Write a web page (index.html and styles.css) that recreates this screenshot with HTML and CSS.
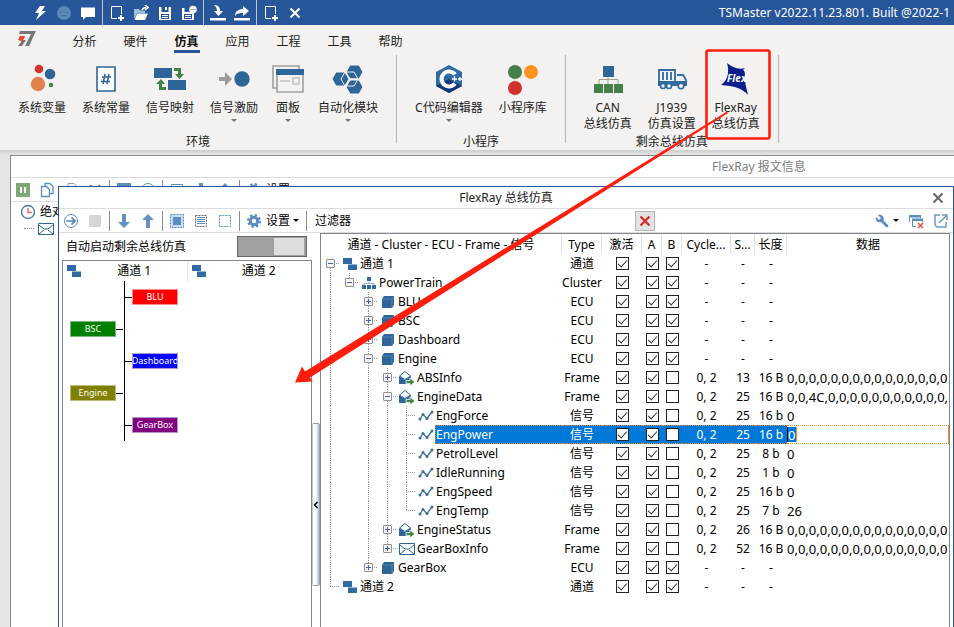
FILE: index.html
```html
<!DOCTYPE html>
<html lang="zh-CN">
<head>
<meta charset="utf-8">
<title>TSMaster</title>
<link rel="stylesheet" href="styles.css">
</head>
<body>
<svg class="defs" aria-hidden="true">
  <symbol id="i-channel" viewBox="0 0 16 16"><path fill="#2f6aa3" d="M1 2h9v6H1zM6 8.500h9v5.500H6z"/></symbol>
  <symbol id="i-cluster" viewBox="0 0 16 16"><path fill="none" stroke="#8fb2d4" d="M8 5v4M3 11V8.500h10V11"/><path fill="#2f6aa3" d="M6 2h4v4H6zM1 10h4v4H1zM6 10h4v4H6zM11 10h4v4h-4z"/></symbol>
  <symbol id="i-ecu" viewBox="0 0 16 16"><path fill="#2f6699" d="M2 5l2-3h10v9l-2 3H2z"/><path fill="none" stroke="#5d8cb8" stroke-width=".7" d="M2 5h10v9M12 5l2-3"/></symbol>
  <symbol id="i-frame" viewBox="0 0 16 16"><path fill="#2f6699" d="M0 6l6 4 6-4v8H0z"/><path fill="#fff" stroke="#2f6699" d="M.5 6L6 1.500 11.500 6 6 9.500z"/><path fill="#3f8347" stroke="#fff" stroke-width=".8" d="M7 10.500h4V8l5 4-5 4v-2.500H7z"/></symbol>
  <symbol id="i-mail" viewBox="0 0 16 16"><path fill="#fff" stroke="#2f6699" d="M.5 2.500h15v11H.500z"/><path fill="none" stroke="#2f6699" d="M1 4l5 4h4l5-4M1 13l5-4M15 13l-5-4"/></symbol>
  <symbol id="i-signal" viewBox="0 0 16 16"><path fill="none" stroke="#3d6f9f" stroke-width="1.300" d="M2 11l3-4.500 4 4L14 4"/><g fill="#3d6f9f"><circle cx="2" cy="11" r="1.500"/><circle cx="5" cy="6.500" r="1.500"/><circle cx="9" cy="10.500" r="1.500"/><circle cx="14" cy="4" r="1.500"/></g></symbol>
  <symbol id="i-down" viewBox="0 0 16 16"><path fill="#6392c2" d="M6 1h4v8h4l-6 6-6-6h4z"/></symbol>
  <symbol id="i-up" viewBox="0 0 16 16"><path fill="#6392c2" d="M6 15h4V7h4L8 1 2 7h4z"/></symbol>
  <symbol id="i-gear" viewBox="0 0 16 16"><circle cx="8" cy="8" r="3.700" fill="none" stroke="#5c8dbf" stroke-width="3"/><circle cx="8" cy="8" r="5.800" fill="none" stroke="#5c8dbf" stroke-width="2.400" stroke-dasharray="2.300 2.255"/></symbol>
  <symbol id="i-newdoc" viewBox="0 0 16 16"><path fill="none" stroke="#fff" d="M8 13.500H2.500v-12h10V9"/><path stroke="#fff" stroke-width="2" d="M9 13h6M12 10v6"/></symbol>
</svg>

<header class="titlebar">
  <nav class="quick">
    <button aria-label="连接"><svg viewBox="0 0 16 16"><path fill="#fff" d="M8 1h5l-3 5h4L4 15l3-7H3z"/></svg></button>
    <button aria-label="状态"><svg viewBox="0 0 16 16"><circle cx="8" cy="8" r="7" fill="#5b87b9"/><path fill="#3f74ad" d="M5 7h1v1H5zM8 7h1v1H8zM11 7h1v1h-1zM5 10h6v1H5z"/></svg></button>
    <button aria-label="消息"><svg viewBox="0 0 16 16"><path fill="#fff" d="M1 2.500h14V12H6l-3 3v-3H1z"/></svg></button>
    <i class="qsep"></i>
    <button aria-label="新建"><svg><use href="#i-newdoc"/></svg></button>
    <button aria-label="打开"><svg viewBox="0 0 16 16"><path fill="#9fc0dc" d="M1 4h5l1 1.500h5V8H4l-3 6z"/><path fill="#fff" d="M4 8.500h11L12 15H1.500z"/><path fill="none" stroke="#fff" stroke-width="1.600" d="M9 5c1-2 2-2.500 4-2.500M12 0l3 2.500L12 5"/></svg></button>
    <button aria-label="保存"><svg viewBox="0 0 16 16"><path fill="#fff" fill-rule="evenodd" d="M2 2h12v13H2zM4.500 2v5h7V2zM4 9v5h8V9z"/><path fill="#fff" d="M8 2h2v3H8zM5 10h6v1H5zM5 12h6v1H5z"/></svg></button>
    <button aria-label="另存为"><svg viewBox="0 0 16 16"><path fill="#fff" fill-rule="evenodd" d="M1 3h12v12H1zM3.500 3v4h7V3zM3 9v5h8V9z"/><path fill="#fff" d="M4 10h6v1H4zM4 12h6v1H4z"/><circle cx="12" cy="4.500" r="3.800" fill="#fff"/><path stroke="#27569b" d="M9.500 4.500h1M11.500 4.500h1M13.500 4.500h1"/></svg></button>
    <i class="qsep"></i>
    <button aria-label="导入"><svg viewBox="0 0 16 16"><path fill="#fff" d="M4 0c4 0 6 2 6 6h3l-4.500 5L4 6h3c0-3-1-4-3-6zM0 13h16v2.500H0z"/></svg></button>
    <button aria-label="导出"><svg viewBox="0 0 16 16"><path fill="#fff" d="M1 11c0-5 4-7 8-7V1l6 5-6 5V8c-3 0-6 0-8 3zM0 13h16v2.500H0z"/></svg></button>
    <i class="qsep"></i>
    <button aria-label="添加"><svg><use href="#i-newdoc"/></svg></button>
    <button aria-label="关闭"><svg viewBox="0 0 16 16"><path stroke="#fff" stroke-width="2" d="M3.500 3.500l9 9M12.500 3.500l-9 9"/></svg></button>
  </nav>
  <span class="apptitle">TSMaster v2022.11.23.801. Built @2022-1</span>
</header>

<nav class="tabs">
  <svg class="logo" viewBox="0 0 20 18"><path fill="#77787a" d="M3 1h16l-7 15H8l6-12H2z"/><path fill="#77787a" d="M4 10h5l-4 6H1l3-4z"/><path fill="#ee4431" d="M3 6h5L6 11H4l-3-1z"/></svg>
  <a href="#">分析</a><a href="#">硬件</a><a href="#" class="on">仿真</a><a href="#">应用</a><a href="#">工程</a><a href="#">工具</a><a href="#">帮助</a>
</nav>

<div class="ribbon">
  <section class="group">
    <div class="items">
      <button><svg viewBox="0 0 32 32"><circle cx="13" cy="6" r="4.300" fill="#d3322f"/><circle cx="24" cy="11" r="5.300" fill="#2f6699"/><circle cx="12" cy="21" r="7.200" fill="#e0804a"/><circle cx="25" cy="22" r="2.200" fill="#3f8347"/></svg><span>系统变量</span></button>
      <button><svg viewBox="0 0 32 32"><path fill="#fff" stroke="#2f6699" stroke-width="1.600" d="M7 4h18v24H7z"/><path fill="none" stroke="#2f6699" stroke-width="1.500" d="M15 11l-2 10M19 11l-2 10M12 14h9M11 18.500h9"/></svg><span>系统常量</span></button>
      <button><svg viewBox="0 0 32 32"><path fill="#2f6699" d="M0 5h18v10H0zM14 17h18v10H14z"/><path fill="#3f8347" d="M20 5h7v6h3l-4.500 5L21 11h3V8h-4zM12 27H5v-6H2l5-5 4 5H8v3h4z"/></svg><span>信号映射</span></button>
      <button><svg viewBox="0 0 32 32"><path fill="#9c9c9c" d="M1 14h6v-5l7 7-7 7v-5H1z"/><circle cx="24" cy="16" r="7.700" fill="#2f6699"/></svg><span>信号激励</span><i class="caret"></i></button>
      <button><svg viewBox="0 0 32 32"><path fill="#f3f2f0" stroke="#a0a0a0" stroke-width="1.600" d="M1 3h26v22H1z"/><path fill="#f3f2f0" stroke="#a0a0a0" stroke-width="1.600" d="M5 7h26v22H5z"/><path fill="#2f6699" d="M4 6h28v6H4z"/><path fill="none" stroke="#ccc" stroke-width="2" d="M8 18h10M21 15h6v6h-6z"/></svg><span>面板</span><i class="caret"></i></button>
      <button><svg viewBox="0 0 32 32"><g fill="#2f6699" stroke="#f3f2f0"><path d="M14 9l4-7h9l4 7-4 7h-9zM14 24l4-7h9l4 7-4 7h-9zM0 16l4-7h9l4 7-4 7H4z"/><path fill="none" d="M9 16l4-7h9l4 7-4 7h-9zM13 9l5 7-5 7M18 16h8"/></g></svg><span>自动化模块</span><i class="caret"></i></button>
    </div>
    <h2>环境</h2>
  </section>
  <section class="group">
    <div class="items">
      <button><svg viewBox="0 0 32 32"><path fill="#2f6aa3" d="M16 2l13 7v14l-13 7-13-7V9z"/><path fill="#10357a" d="M16 16l13 7-13 7-13-7z"/><path fill="none" stroke="#fff" stroke-width="4" d="M22 11.500a7.500 7.500 0 1 0 0 9"/><path stroke="#fff" stroke-width="1.300" d="M19 16h5M21.500 13.500v5M25 16h4M27 14v4"/></svg><span>C代码编辑器</span><i class="caret"></i></button>
      <button><svg viewBox="0 0 32 32"><circle cx="8" cy="9" r="7" fill="#45804a"/><circle cx="24" cy="9" r="7" fill="#ff9220"/><circle cx="8" cy="25" r="7" fill="#d3322f"/></svg><span>小程序库</span></button>
    </div>
    <h2>小程序</h2>
  </section>
  <section class="group">
    <div class="items">
      <button><svg viewBox="0 0 32 32"><path fill="none" stroke="#a0a39c" d="M16 13v9M7 21v-4.500h19V21"/><path fill="#2f6699" d="M11 3h11v11H11z"/><path fill="#45804a" d="M2 21h9v9H2zM12 21h9v9h-9zM22 21h9v9h-9z"/></svg><span>CAN<br>总线仿真</span></button>
      <button><svg viewBox="0 0 32 32"><path fill="none" stroke="#2f6aa3" stroke-width="1.800" d="M3 7h16v12H3zM7 9v8M11 9v8M15 9v8M21 12h6l3 5v5H3v-3"/><path fill="#2f6aa3" d="M2 18h29v5H2z"/><g fill="#f3f2f0" stroke="#2f6aa3" stroke-width="1.600"><circle cx="7" cy="23" r="2.500"/><circle cx="13" cy="23" r="2.500"/><circle cx="25" cy="23" r="2.800"/></g></svg><span>J1939<br>仿真设置</span></button>
      <button><svg viewBox="0 0 32 32"><path fill="#0a1e8c" d="M7 0c5 4 11 7 18 5l-2 2c2 1 1 2 2 3-1 6 1 13 3 22-6-7-14-9-27-10C7 18 10 10 7 0z"/><text x="7" y="19" class="flexmark">Flex</text></svg><span>FlexRay<br>总线仿真</span></button>
    </div>
    <h2>剩余总线仿真</h2>
  </section>
</div>

<main class="desk">
  <section class="win back">
    <h1>FlexRay 报文信息</h1>
    <div class="toolbar">
      <button aria-label="暂停"><svg viewBox="0 0 16 16"><path fill="#7ca874" d="M1 1h14v14H1z"/><path fill="#fff" d="M5 5h2v6H5zM9 5h2v6H9z"/></svg></button>
      <button aria-label="复制"><svg viewBox="0 0 16 16"><path fill="#fff" stroke="#5c8dbf" stroke-width="1.300" d="M6 1.500h5l3 3v7H6z"/><path fill="#fff" stroke="#5c8dbf" stroke-width="1.300" d="M2.500 4.500h5l3 3v7h-8z"/></svg></button>
      <button aria-label="粘贴"><svg viewBox="0 0 16 16"><path fill="#fff" stroke="#999" d="M5 1.500h6l3 3v9H5zM2.500 4.500h6v10h-6z"/></svg></button>
      <button aria-label="清除"><svg viewBox="0 0 16 16"><path stroke="#e0695c" stroke-width="2" d="M3 3l10 10M13 3L3 13"/></svg></button>
      <i class="sep"></i>
      <button aria-label="筛选"><svg viewBox="0 0 16 16"><path fill="#5c8dbf" d="M1 1h14v5H1z"/></svg></button>
      <button aria-label="时间"><svg viewBox="0 0 16 16"><circle cx="8" cy="8" r="6.500" fill="none" stroke="#5c8dbf"/></svg></button>
      <i class="sep"></i>
      <button aria-label="展开"><svg viewBox="0 0 16 16"><path fill="none" stroke="#5c8dbf" d="M2.500 2.500h11v11h-11z"/></svg></button>
      <button aria-label="下移"><svg><use href="#i-down"/></svg></button>
      <button aria-label="上移"><svg><use href="#i-up"/></svg></button>
      <i class="sep"></i>
      <button class="wide"><svg><use href="#i-gear"/></svg><span>设置</span></button>
    </div>
    <ul class="msgs">
      <li><svg viewBox="0 0 16 16"><circle cx="8" cy="8" r="6.500" fill="#fff" stroke="#3d6fa3" stroke-width="1.300"/><path fill="none" stroke="#f06a50" stroke-width="1.500" d="M8 4v4.500h4"/></svg>绝对时间</li>
      <li class="sub"><svg><use href="#i-mail"/></svg></li>
    </ul>
  </section>

  <section class="win front">
    <h1>FlexRay 总线仿真<button class="close" aria-label="关闭窗口"><svg viewBox="0 0 16 16"><path stroke="#666" stroke-width="2" d="M3.500 3.500l9 9M12.500 3.500l-9 9"/></svg></button></h1>
    <div class="toolbar">
      <button aria-label="启动"><svg viewBox="0 0 16 16"><circle cx="8" cy="8" r="6.500" fill="none" stroke="#5c8dbf"/><path fill="none" stroke="#4e82b8" stroke-width="1.700" d="M3.500 8H12M8.500 4.500L12 8l-3.500 3.500"/></svg></button>
      <button aria-label="停止"><svg viewBox="0 0 16 16"><path fill="#d6d6d6" d="M2 2h12v12H2z"/></svg></button>
      <i class="sep"></i>
      <button aria-label="下移"><svg><use href="#i-down"/></svg></button>
      <button aria-label="上移"><svg><use href="#i-up"/></svg></button>
      <i class="sep"></i>
      <button aria-label="全选"><svg viewBox="0 0 16 16"><path fill="#c9dcee" stroke="#5c8dbf" stroke-dasharray="2 1" d="M1.500 1.500h13v13h-13z"/><path fill="#5c8dbf" d="M4 4h8v8H4z"/></svg></button>
      <button aria-label="选择"><svg viewBox="0 0 16 16"><path fill="none" stroke="#666" stroke-dasharray="2 1" d="M2.500 2.500h11v11h-11z"/><path stroke="#5c8dbf" d="M4 4.500h8M4 6.500h8M4 8.500h8M4 10.500h8"/></svg></button>
      <button aria-label="取消选择"><svg viewBox="0 0 16 16"><path fill="none" stroke="#5c8dbf" stroke-dasharray="2 1" d="M2.500 2.500h11v11h-11z"/></svg></button>
      <i class="sep"></i>
      <button class="wide"><svg><use href="#i-gear"/></svg><span>设置</span><i class="caret dark"></i></button>
      <i class="sep"></i>
      <label for="filter">过滤器</label>
      <input id="filter" type="text">
      <button class="clear" aria-label="清除过滤"><svg viewBox="0 0 16 16"><path stroke="#d3322f" stroke-width="2.400" d="M3.500 3.500l9 9M12.500 3.500l-9 9"/></svg></button>
      <button class="tools" aria-label="工具"><svg viewBox="0 0 16 16"><path fill="#5c8dbf" d="M4 2l3 3-2 2-3-3c-1 3 1 6 5 5l5 5c2 1 3-1 2-2L9.500 7.500C10.500 4 8 1 4 2z"/></svg><i class="caret dark"></i></button>
      <button class="end" aria-label="关闭全部"><svg viewBox="0 0 16 16"><path fill="none" stroke="#5c8dbf" d="M1.500 9V2.500h11V5M8 13.500H4.500v-7h10V9"/><path fill="#5c8dbf" d="M1 2h12v2.500H1zM4 5.500h11v2.500H4z"/><path stroke="#e0593a" stroke-width="1.600" d="M10 10l5 5M15 10l-5 5"/></svg></button>
      <button class="end" aria-label="弹出"><svg viewBox="0 0 16 16"><path fill="none" stroke="#6b9ac8" stroke-width="1.500" d="M7 2H2v10l2 2h9V9M6 10l7-7M9 2h5v5"/></svg></button>
    </div>
    <div class="body">
      <aside>
        <div class="auto"><label for="auto">自动启动剩余总线仿真</label><input id="auto" type="checkbox" role="switch" class="switch"></div>
        <div class="topo">
          <div class="chans"><div><svg><use href="#i-channel"/></svg><span>通道 1</span></div><div><svg><use href="#i-channel"/></svg><span>通道 2</span></div></div>
          <div class="bus">
            <div class="r red"><b>BLU</b></div>
            <div class="l green"><b>BSC</b></div>
            <div class="r blue"><b>Dashboard</b></div>
            <div class="l olive"><b>Engine</b></div>
            <div class="r purple"><b>GearBox</b></div>
          </div>
        </div>
      </aside>
      <div class="split"><button aria-label="折叠"><svg viewBox="0 0 6 8"><path fill="none" stroke="#000" stroke-width="1.500" d="M4.500 1L1.500 4l3 3"/></svg></button></div>
      <div class="grid">
        <table>
          <colgroup><col class="c-tree"><col class="c-type"><col class="c-act"><col class="c-ab"><col class="c-ab"><col class="c-cyc"><col class="c-slot"><col class="c-len"><col></colgroup>
          <thead><tr><th>通道 - Cluster - ECU - Frame - 信号</th><th>Type</th><th>激活</th><th>A</th><th>B</th><th>Cycle...</th><th>S...</th><th>长度</th><th>数据</th></tr></thead>
          <tbody id="rows"></tbody>
        </table>
      </div>
    </div>
  </section>
</main>

<svg class="note" viewBox="0 0 954 627" aria-hidden="true"><rect x="706.500" y="50.500" width="63" height="88" rx="2" fill="none" stroke="#ff1e0c" stroke-width="2.600"/><path fill="#ff1e0c" d="M727 111.500L305 371.500 302 366.500 295 382.500 312.500 381.500 310 377.500 728 113z"/></svg>
<script src="rows.js"></script>
</body>
</html>
```

FILE: rows.js
```js
// Guides, one letter per tree level: "-" empty, "|" line, "T" branch, "L" last branch,
// "+" collapsed, "p" collapsed, last child, "o" expanded, "f" first row, "e" expanded, last child.
const zeros = n => Array(n).fill('0').join(',');
const data = [
  ['f', 'channel', '通道 1', '通道', 1],
  ['|e', 'cluster', 'PowerTrain', 'Cluster', 1],
  ['|-+', 'ecu', 'BLU', 'ECU', 1],
  ['|-+', 'ecu', 'BSC', 'ECU', 1],
  ['|-+', 'ecu', 'Dashboard', 'ECU', 1],
  ['|-o', 'ecu', 'Engine', 'ECU', 1],
  ['|-|+', 'frame', 'ABSInfo', 'Frame', 0, '0, 2', '13', '16 B', zeros(15)],
  ['|-|o', 'frame', 'EngineData', 'Frame', 0, '0, 2', '25', '16 B', '0,0,4C,' + zeros(11) + ','],
  ['|-||T', 'signal', 'EngForce', '信号', 0, '0, 2', '25', '16 b', '0'],
  ['|-||T', 'signal', 'EngPower', '信号', 0, '0, 2', '25', '16 b', '0', true],
  ['|-||T', 'signal', 'PetrolLevel', '信号', 0, '0, 2', '25', '8 b', '0'],
  ['|-||T', 'signal', 'IdleRunning', '信号', 0, '0, 2', '25', '1 b', '0'],
  ['|-||T', 'signal', 'EngSpeed', '信号', 0, '0, 2', '25', '16 b', '0'],
  ['|-||L', 'signal', 'EngTemp', '信号', 0, '0, 2', '25', '7 b', '26'],
  ['|-|+', 'frame', 'EngineStatus', 'Frame', 0, '0, 2', '26', '16 B', zeros(15)],
  ['|-|p', 'mail', 'GearBoxInfo', 'Frame', 0, '0, 2', '52', '16 B', zeros(15)],
  ['|-p', 'ecu', 'GearBox', 'ECU', 1],
  ['L', 'channel', '通道 2', '通道', 1]
];
const cls = { '-': '', '|': 'v', T: 'v h', L: 'up h', '+': 'v h box plus', p: 'up h box plus', o: 'v h box', f: 'dn h box', e: 'up h box' };
const check = (name, on) => `<td><input type="checkbox" aria-label="${name}"${on ? ' checked' : ''}></td>`;
document.getElementById('rows').innerHTML = data.map(([g, icon, name, type, b, cyc = '-', slot = '-', len = '-', val = '', sel]) => {
  const guides = [...g].map(c => `<i class="g ${cls[c]}">${/[+pofe]/.test(c) ? '<button aria-label="展开或折叠"></button>' : ''}</i>`).join('');
  const cell = sel ? `<input type="text" aria-label="数据" value="${val}">` : val;
  return `<tr${sel ? ' class="sel"' : ''}><td><div class="node">${guides}<svg><use href="#i-${icon}"/></svg><span>${name}</span></div></td><td><span class="type">${type}</span></td>`
    + check(name + ' 激活', 1) + check(name + ' A', 1) + check(name + ' B', b)
    + `<td>${cyc}</td><td>${slot}</td><td>${len}</td><td>${cell}</td></tr>`;
}).join('');
```

FILE: styles.css
```css
* { box-sizing: border-box; }
body { margin: 0; height: 100vh; overflow: hidden; display: flex; flex-direction: column; background: #f3f2f0; color: #000; font: 12px/16px "Noto Sans", "Noto Sans CJK SC", sans-serif; position: relative; }
button { border: 0; padding: 0; margin: 0; background: none; font: inherit; color: inherit; display: flex; align-items: center; justify-content: center; }
svg { width: 16px; height: 16px; flex: none; display: block; }
h1, h2 { margin: 0; font-size: 12px; font-weight: 400; }
.defs { position: absolute; width: 0; height: 0; }

.titlebar { height: 25px; flex: none; background: #27569b; color: #fff; display: flex; align-items: center; justify-content: space-between; white-space: nowrap; padding-right: 4px; }
.quick { display: flex; align-items: center; padding-left: 28px; }
.quick button { width: 24px; height: 25px; }
.qsep { width: 1px; height: 25px; background: #c4c4c4; margin: 0 2px; }

.tabs { height: 28px; flex: none; display: flex; align-items: center; padding-left: 17px; }
.logo { width: 20px; height: 18px; margin-right: 22px; }
.tabs a { width: 51px; height: 28px; line-height: 34px; text-align: center; color: #222; text-decoration: none; }
.tabs .on { font-weight: 700; color: #111; background: linear-gradient(#27569b, #27569b) center bottom / 26px 3px no-repeat; }

.ribbon { height: 97px; flex: none; display: flex; color: #222; }
.group { padding: 10px 10px 0; margin: 2px 0 7px; border-right: 1px solid #b5b5b5; display: flex; flex-direction: column; justify-content: space-between; }
.group h2 { text-align: center; margin-bottom: -7px; }
.items { display: flex; padding: 0; }
.items button { padding: 0 8px; flex-direction: column; justify-content: flex-start; line-height: 16px; white-space: nowrap; }
.items svg { width: 32px; height: 32px; margin: -2px -2px 5px; }
.caret { border: 3px solid transparent; border-top-color: #777; border-bottom: 0; margin-top: 3px; }
.caret.dark { border-top-color: #000; margin: 0 0 0 3px; }
.flexmark { font: italic 700 10px "Noto Sans", sans-serif; fill: #fff; }

.desk { flex: 1; min-height: 0; position: relative; overflow: hidden; background: linear-gradient(#cdcdcd, #e5e5e5 5px); }
.win { position: absolute; background: #fff; display: flex; flex-direction: column; }
.win h1 { height: 22px; line-height: 21px; flex: none; text-align: center; border-bottom: 1px solid #dcdcdc; position: relative; color: #222; }
.back { left: 10px; top: 5px; bottom: 0; width: 157%; border: 1px solid #8a8a8a; border-bottom: 0; }
.back h1 { color: #808080; }
.front { left: 58px; right: 0; top: 36px; bottom: 0; border: 1px solid #27569b; border-bottom: 0; }
.close { position: absolute; right: 7px; top: 3px; }
.toolbar { height: 24px; flex: none; display: flex; align-items: center; border-bottom: 1px solid #dcdcdc; }
.toolbar button { width: 24px; height: 20px; flex: none; }
.toolbar .wide { width: auto; padding: 0 5px 0 4px; }
.wide span { margin-left: 4px; }
.sep { width: 1px; height: 20px; margin: 0 2px; background: #8c8c8c; flex: none; }
.toolbar label { margin-left: 6px; }
.toolbar input { flex: 0 1 280px; min-width: 0; height: 20px; border: 0; margin-left: 4px; padding: 0 4px; font: inherit; }
.toolbar .clear { width: 20px; background: #e3e3e3; border: 1px solid #b5b5b5; }
.toolbar .tools { width: 26px; margin-left: auto; margin-right: 4px; }
.toolbar .end { width: 25px; }
.msgs { margin: 0; padding: 1px 0 0 9px; list-style: none; }
.msgs li { display: flex; align-items: center; gap: 4px; height: 17px; }
.msgs .sub::before { content: ""; width: 10px; margin-left: 4px; border-top: 1px dotted #888; }

.body { flex: 1; min-height: 0; display: flex; }
aside { flex: 0 0 253px; padding-left: 3px; display: flex; flex-direction: column; }
.auto { height: 27px; flex: none; display: flex; align-items: center; justify-content: space-between; padding: 0 5px 0 4px; }
.switch { appearance: none; margin: 0; width: 70px; height: 21px; border: 1px solid #666; background: linear-gradient(#dedede, #dedede) 36px 1px / 30px 17px no-repeat #a0a0a0; }
.topo { flex: 1; border: 1px solid #828790; border-bottom: 0; }
.chans { display: flex; height: 20px; }
.chans div { flex: 1; display: flex; align-items: center; padding-left: 3px; border-right: 1px solid #e2e2e2; }
.chans div:last-child { border: 0; }
.chans span { flex: 1; text-align: center; }
.bus { width: 124px; height: 160px; background: linear-gradient(#000, #000) 61px 0 / 1px 100% no-repeat; }
.bus div { height: 32px; display: flex; align-items: center; }
.bus b { width: 46px; height: 16px; flex: none; overflow: hidden; display: flex; justify-content: center; font: 9px/14px "Noto Sans", sans-serif; color: #fff; border: 1px solid #b49ad6; }
.bus .r { padding-left: 62px; }
.bus .r::before, .bus .l::after { content: ""; width: 7px; height: 1px; background: #000; }
.bus .l { padding-left: 7px; }
.red b { background: #f00; border-color: #ff8c8c; }
.green b { background: #008000; border-color: #7fb97f; }
.blue b { background: #00f; }
.olive b { background: #808000; border-color: #bcbc7a; }
.purple b { background: #800080; }

.split { flex: 0 0 8px; padding-top: 190px; }
.split button { width: 8px; height: 163px; border: 1px solid #a0a0a8; border-left-color: #c8c8c8; border-radius: 2px; background: linear-gradient(90deg, #fff 45%, #a9c1dd); }
.split svg { width: 6px; height: 8px; }

.grid { flex: 1; min-width: 0; margin-right: 3px; border: 1px solid #828790; border-bottom: 0; overflow: hidden; }
table { width: 100%; table-layout: fixed; border-collapse: separate; border-spacing: 0; }
.c-tree { width: 241px; }
.c-type, .c-act { width: 40px; }
.c-ab { width: 20px; }
.c-cyc { width: 49px; }
.c-slot { width: 24px; }
.c-len { width: 32px; }
th, td { padding: 0; height: 19px; line-height: 16px; white-space: nowrap; overflow: hidden; text-align: center; font-weight: 400; }
th { height: 20px; padding-top: 2px; border-right: 1px solid #e2e2e2; }
th:last-child { border: 0; }
td:last-child { text-align: left; font-size: 13px; line-height: 14px; }
.type { display: flex; justify-content: center; }
.node { display: flex; align-items: center; height: 19px; text-align: left; }
.node > svg { margin: 0 1px 0 2px; }
.node > span { flex: 1; height: 19px; padding-left: 1px; line-height: 19px; }
.g { width: 19px; height: 19px; flex: none; display: flex; align-items: center; justify-content: center; --v: repeating-linear-gradient(#999 0 1px, transparent 1px 2px); --h: repeating-linear-gradient(90deg, #999 0 1px, transparent 1px 2px); }
.v { background: var(--v) 9px 0 / 1px 19px no-repeat; }
.v.h { background: var(--v) 9px 0 / 1px 19px no-repeat, var(--h) 9px 9px / 10px 1px no-repeat; }
.up.h { background: var(--v) 9px 0 / 1px 10px no-repeat, var(--h) 9px 9px / 10px 1px no-repeat; }
.dn.h { background: var(--v) 9px 10px / 1px 9px no-repeat, var(--h) 9px 9px / 10px 1px no-repeat; }
.g button { width: 9px; height: 9px; border: 1px solid #919191; border-radius: 1px; background: linear-gradient(#3f5fb0, #3f5fb0) center / 5px 1px no-repeat #f4f4f4; }
.plus button { background: linear-gradient(#3f5fb0, #3f5fb0) center / 5px 1px no-repeat, linear-gradient(#3f5fb0, #3f5fb0) center / 1px 5px no-repeat #f4f4f4; }
td input[type=checkbox] { appearance: none; width: 13px; height: 13px; margin: 0 auto; border: 1px solid #222; background: #fff; display: flex; justify-content: center; }
td input:checked::after { content: ""; width: 4px; height: 8px; border: solid #333; border-width: 0 1px 1px 0; transform: rotate(42deg); }
.sel td, .sel .node > span { background: #0078d7; color: #fff; border: dotted #e88b34; border-width: 1px 0; }
.sel td:first-child { background: #fff; border: 0; }
.sel .node > span { border-width: 1px 0 1px 1px; padding-left: 0; line-height: 17px; }
.sel td:last-child { background: #fff; border-right: 1px solid #ff8c1a; }
.sel input[type=text] { display: block; width: 10px; height: 15px; border: 0; border-left: 1px solid #000; border-right: 1px solid #ff8c1a; padding: 0; background: #0078d7; color: #fff; font: inherit; }
.note { position: absolute; left: 0; top: 0; width: 954px; height: 627px; pointer-events: none; }
```
